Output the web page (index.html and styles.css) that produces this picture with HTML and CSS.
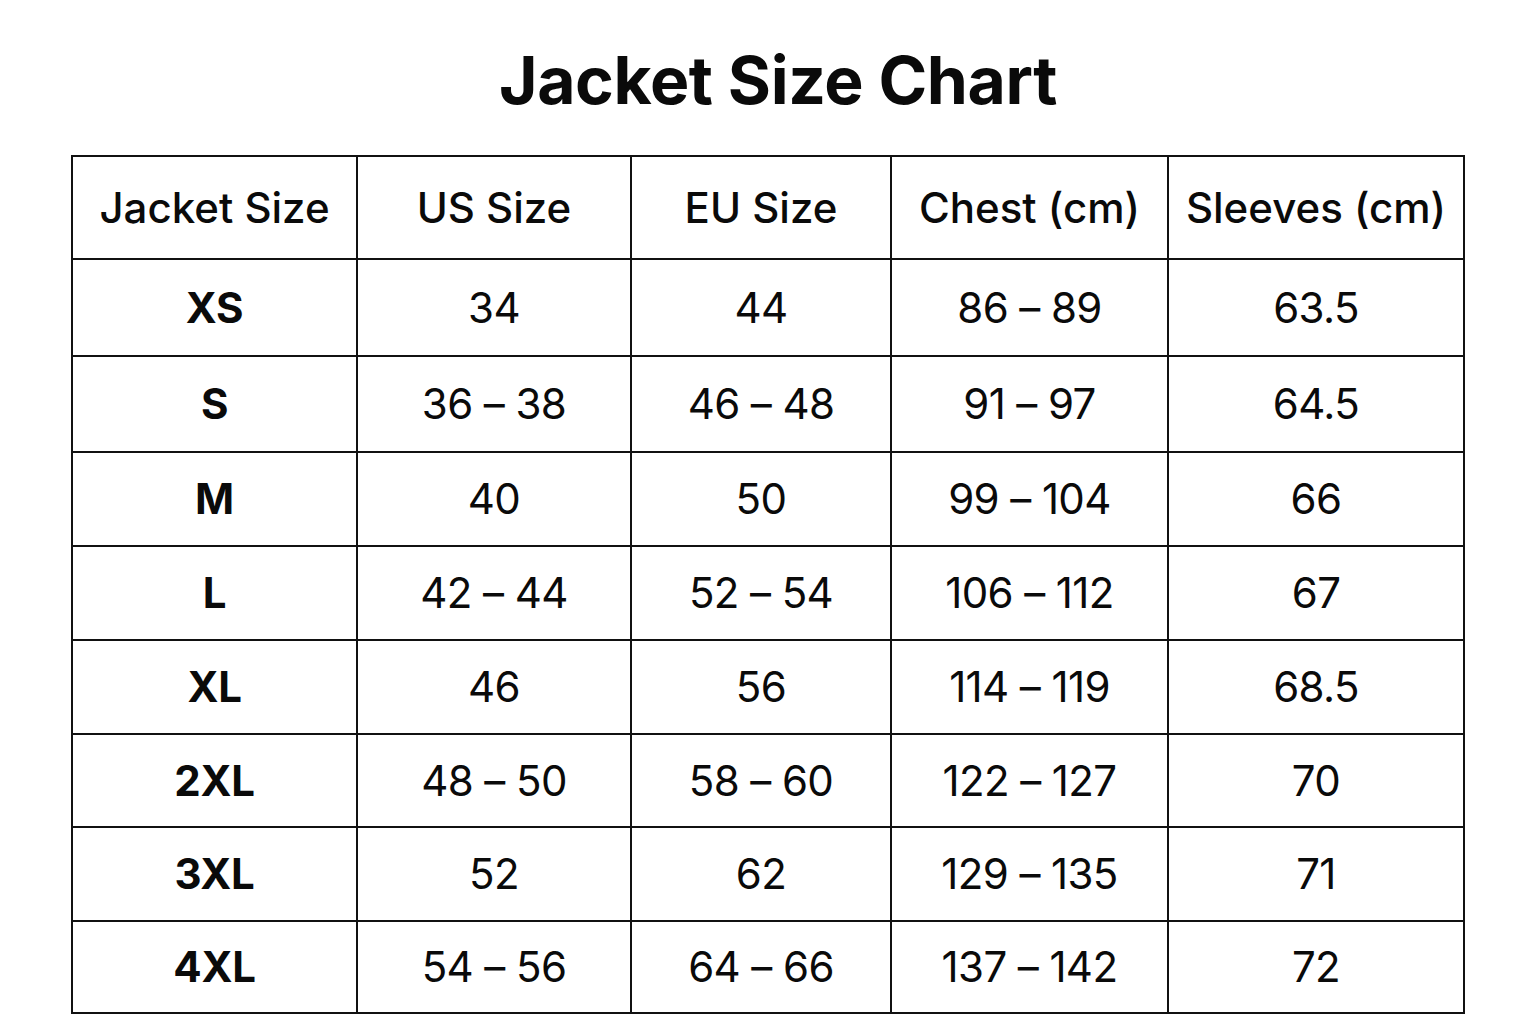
FILE: index.html
```html
<!DOCTYPE html>
<html lang="en">
<head>
<meta charset="utf-8">
<title>Jacket Size Chart</title>
<link rel="stylesheet" href="styles.css">
</head>
<body>
<main class="page">
  <h1 class="title">Jacket Size Chart</h1>
  <table class="chart">
    <colgroup>
      <col class="c1"><col class="c2"><col class="c3"><col class="c4"><col class="c5">
    </colgroup>
    <thead>
      <tr class="head-row">
        <th>Jacket Size</th><th>US Size</th><th>EU Size</th><th>Chest (cm)</th><th>Sleeves (cm)</th>
      </tr>
    </thead>
    <tbody>
      <tr class="r1"><td class="sz">XS</td><td>34</td><td>44</td><td>86 – 89</td><td>63.5</td></tr>
      <tr class="r2"><td class="sz">S</td><td>36 – 38</td><td>46 – 48</td><td>91 – 97</td><td>64.5</td></tr>
      <tr class="r3"><td class="sz">M</td><td>40</td><td>50</td><td>99 – 104</td><td>66</td></tr>
      <tr class="r4"><td class="sz">L</td><td>42 – 44</td><td>52 – 54</td><td>106 – 112</td><td>67</td></tr>
      <tr class="r5"><td class="sz">XL</td><td>46</td><td>56</td><td>114 – 119</td><td>68.5</td></tr>
      <tr class="r6"><td class="sz">2XL</td><td>48 – 50</td><td>58 – 60</td><td>122 – 127</td><td>70</td></tr>
      <tr class="r7"><td class="sz">3XL</td><td>52</td><td>62</td><td>129 – 135</td><td>71</td></tr>
      <tr class="r8"><td class="sz">4XL</td><td>54 – 56</td><td>64 – 66</td><td>137 – 142</td><td>72</td></tr>
    </tbody>
  </table>
</main>
</body>
</html>
```

FILE: styles.css
```css
html, body {
  margin: 0;
  padding: 0;
  background: #ffffff;
}

body {
  font-family: Inter, "Liberation Sans", Arial, sans-serif;
  color: #0a0a0a;
}

.page {
  width: 1536px;
  height: 1024px;
  overflow: hidden;
  padding-top: 40px;
  box-sizing: border-box;
}

.title {
  margin: 0 0 0 20px;
  height: 115px;
  font-size: 66px;
  font-weight: 700;
  line-height: 80px;
  text-align: center;
  letter-spacing: -0.4px;
}

.chart {
  margin-left: 71px;
  width: 1392px;
  border-collapse: collapse;
  table-layout: fixed;
}

.c1 { width: 285px; }
.c2 { width: 274px; }
.c3 { width: 260px; }
.c4 { width: 277px; }
.c5 { width: 296px; }

.chart th,
.chart td {
  border: 2px solid #111;
  padding: 0;
  text-align: center;
  vertical-align: middle;
  font-size: 42px;
  line-height: 1;
}

.chart th {
  font-weight: 500;
  height: 101px;
}

.chart td {
  font-weight: 400;
  height: 93px;
  letter-spacing: -0.6px;
}

.chart td.sz {
  font-weight: 700;
  letter-spacing: -0.3px;
}

.r1 td { height: 95px; }
.r2 td { height: 94px; }
.r3 td { height: 92px; }
.r4 td { height: 92px; }
.r5 td { height: 92px; }
.r6 td { height: 91px; }
.r7 td { height: 92px; }
.r8 td { height: 90px; }
```
